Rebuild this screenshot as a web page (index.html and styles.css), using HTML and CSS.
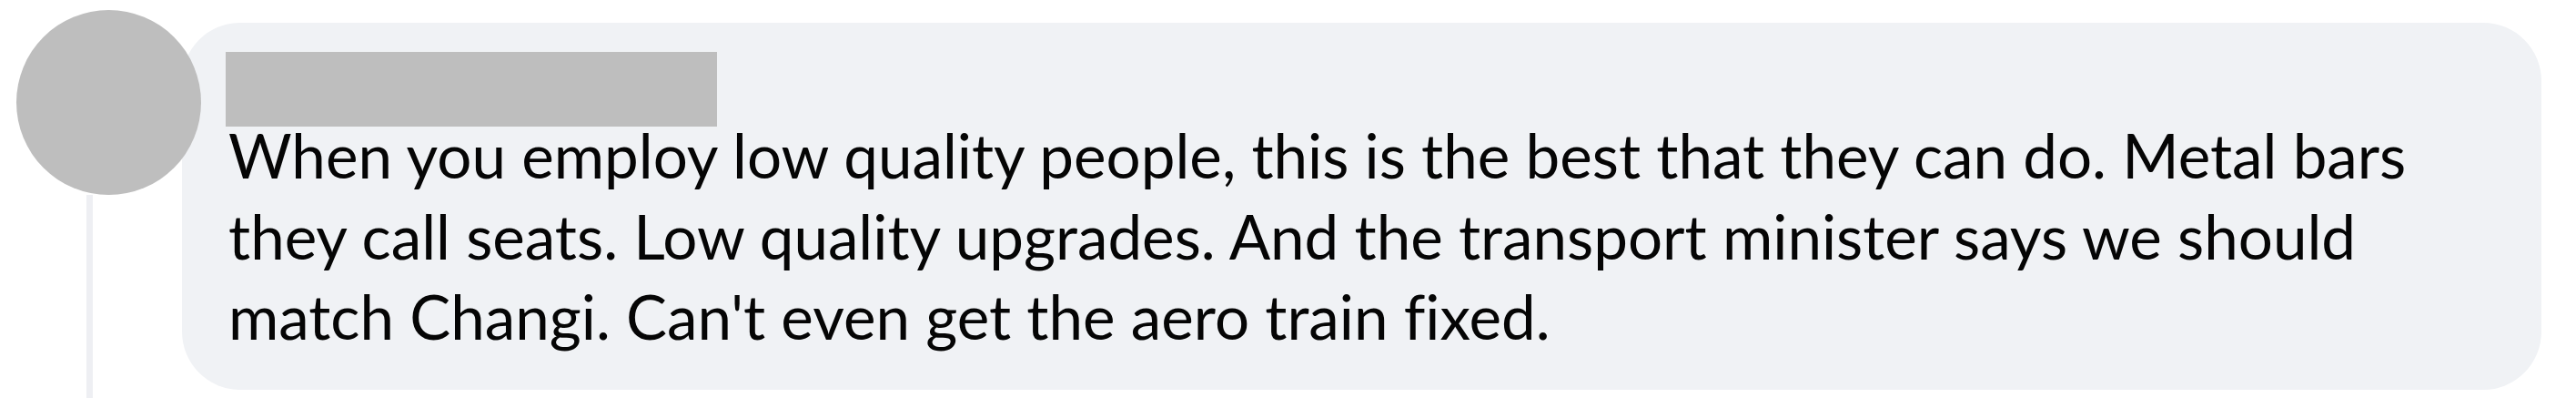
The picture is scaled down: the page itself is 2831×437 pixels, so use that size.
FILE: index.html
```html
<!DOCTYPE html>
<html lang="en">
<head>
  <meta charset="UTF-8">
  <title>Comment</title>
  <link rel="stylesheet" href="styles.css">
</head>
<body>
  <div class="comment">
    <div class="side">
      <div class="avatar"></div>
      <div class="thread"></div>
    </div>
    <div class="bubble">
      <div class="name"></div>
      <p class="text">When you employ low quality people, this is the best that they can do. Metal bars they call seats. Low quality upgrades. And the transport minister says we should match Changi. Can't even get the aero train fixed.</p>
    </div>
  </div>
</body>
</html>
```

FILE: styles.css
```css
body {
  margin: 0;
  background: #fff;
  font-family: Lato, "Liberation Sans", sans-serif;
  color: #050505;
}
.comment {
  display: flex;
  align-items: flex-start;
  height: 437px;
  overflow: hidden;
}
.side {
  display: flex;
  flex-direction: column;
  align-self: stretch;
  flex: none;
  padding: 11px 0 0 18px;
}
.avatar {
  position: relative;
  z-index: 1;
  width: 203px;
  height: 203px;
  border-radius: 50%;
  background: #bebebe;
}
.thread {
  flex: 1;
  width: 7px;
  margin-left: 77px;
  background: #eeeff3;
}
.bubble {
  flex: none;
  width: 2593px;
  margin: 25px 0 0 -21px;
  padding: 32px 48px 36px;
  box-sizing: border-box;
  border-radius: 64px;
  background: #f0f2f5;
}
.name {
  width: 540px;
  height: 82px;
  background: #bebebe;
}
.text {
  margin: -13px 0 0 3px;
  font-size: 67.3px;
  line-height: 88.5px;
  font-variant-ligatures: none;
}
```
